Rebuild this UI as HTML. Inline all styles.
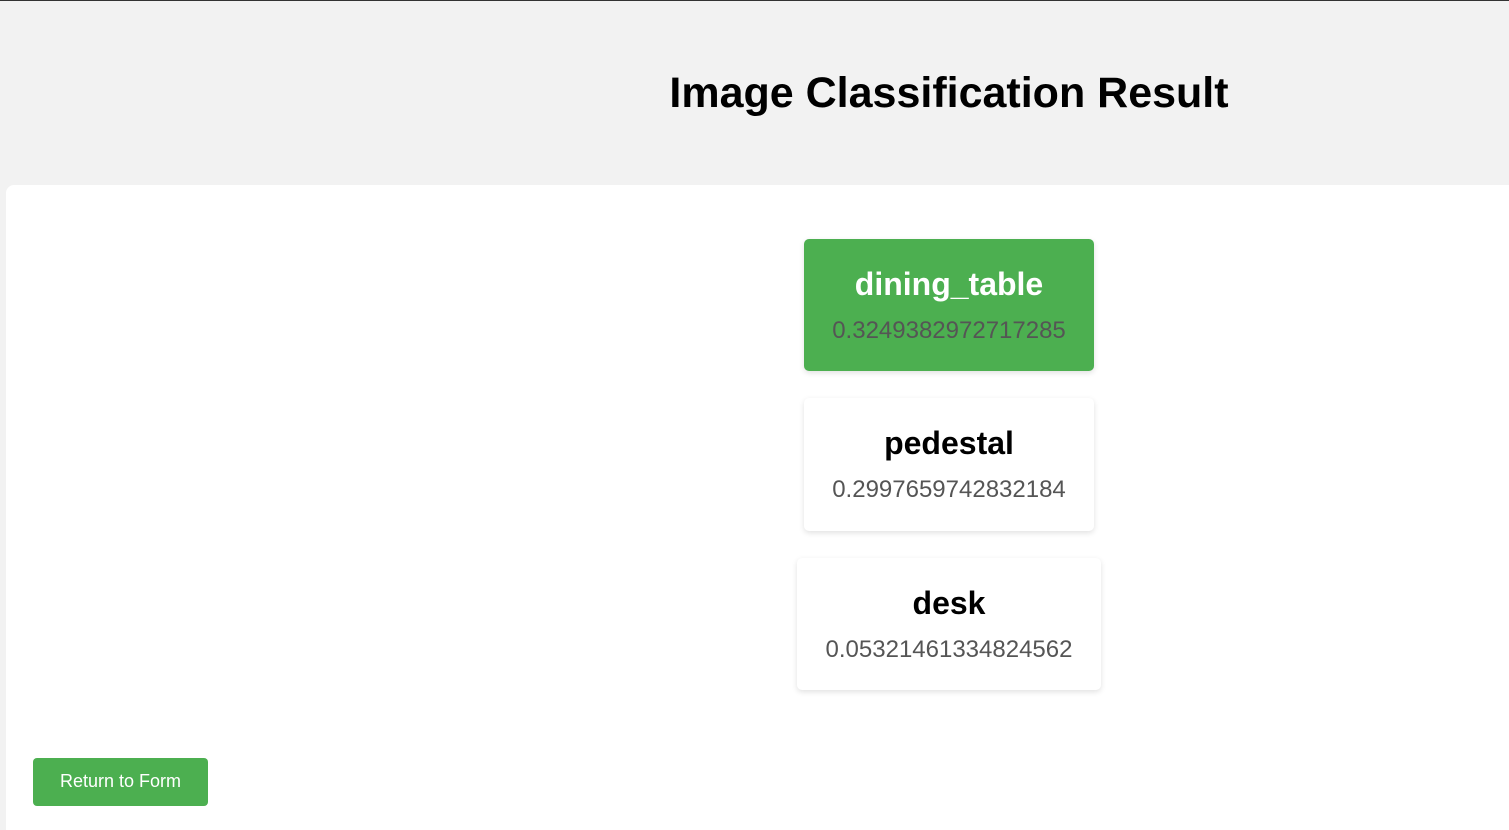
<!DOCTYPE html>
<html><head><style>
*{margin:0;padding:0;box-sizing:border-box}
html,body{width:1509px;height:830px;overflow:hidden}
body{background:#f2f2f2;font-family:"Liberation Sans",Arial,sans-serif;position:relative}
.top{position:absolute;left:0;top:0;width:1509px;height:1px;background:#333}
h1{position:absolute;left:0;width:1898px;top:69px;text-align:center;font-size:43px;font-weight:bold;color:#000}
.panel{position:absolute;left:6px;top:185px;width:1520px;height:660px;background:#fff;border-radius:8px}
.card{position:absolute;background:#fff;border-radius:5px;box-shadow:0 2px 6px rgba(0,0,0,.12);text-align:center}
.card .n{font-size:32px;font-weight:bold;color:#000;margin-top:26px;line-height:38px}
.card .s{font-size:24px;color:#555;margin-top:14px;line-height:28px}
.g{background:#4caf50}
.g .n{color:#fff}
.btn{position:absolute;left:33px;top:758px;width:175px;height:48px;background:#4caf50;border-radius:4px;color:#fff;font-size:18px;text-align:center;line-height:46px}
</style></head><body>
<div class="top"></div>
<h1>Image Classification Result</h1>
<div class="panel"></div>
<div class="card g" style="left:804px;top:239px;width:290px;height:132px"><div class="n">dining_table</div><div class="s">0.3249382972717285</div></div>
<div class="card" style="left:804px;top:398px;width:290px;height:133px"><div class="n">pedestal</div><div class="s">0.2997659742832184</div></div>
<div class="card" style="left:797px;top:558px;width:304px;height:132px"><div class="n">desk</div><div class="s">0.05321461334824562</div></div>
<div class="btn">Return to Form</div>
</body></html>
